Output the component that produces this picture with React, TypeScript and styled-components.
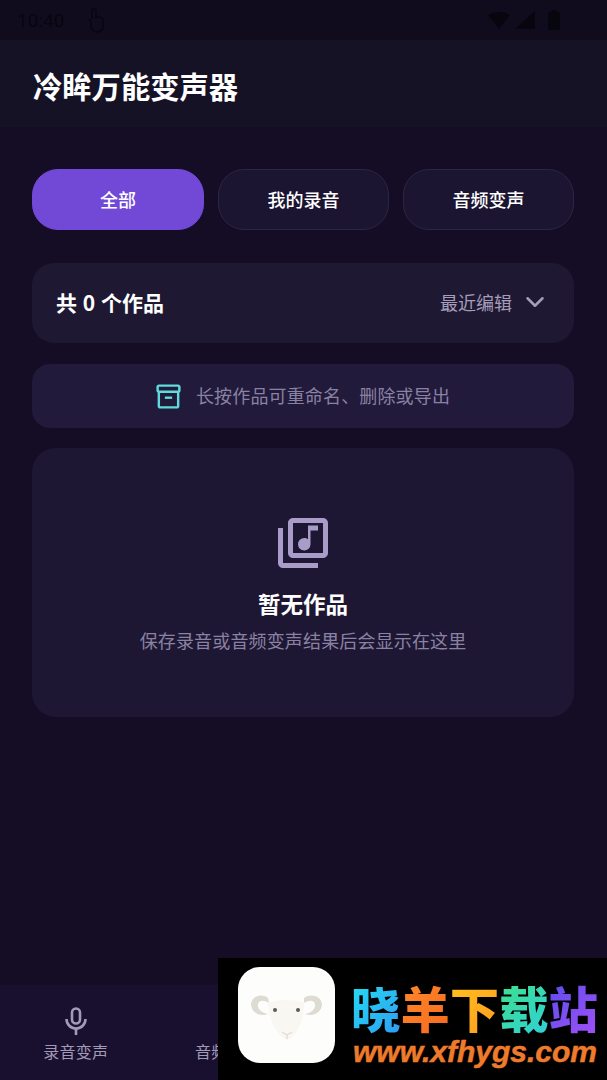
import styled, { createGlobalStyle } from "styled-components";
import { ChevronDown } from "lucide-react";
import { MdOutlineInventory2, MdOutlineLibraryMusic } from "react-icons/md";

const GlobalStyle = createGlobalStyle`
  html, body {
    margin: 0;
    padding: 0;
    background: #150d26;
  }
  * { box-sizing: border-box; }
`;

const CJK = `"Noto Sans CJK SC", "Noto Sans", sans-serif`;

// ── page frame ─────────────────────────────

const Page = styled.div`
  position: relative;
  width: 607px;
  height: 1080px;
  overflow: hidden;
  display: flex;
  flex-direction: column;
  background: #150d26;
  font-family: ${CJK};
`;

const StatusBar = styled.div`
  height: 40px;
  flex: none;
  display: flex;
  align-items: center;
  justify-content: space-between;
  padding: 0 46px 0 17px;
  background: #100c1e;
  color: #07060f;
`;

const StatusGroup = styled.div`
  display: flex;
  align-items: center;
  gap: 24px;
  filter: blur(0.6px);
`;

const StatusIcons = styled(StatusGroup)`
  gap: 5px;
`;

const Clock = styled.span`
  font-family: Roboto, sans-serif;
  font-size: 19px;
`;

const Header = styled.header`
  height: 87px;
  flex: none;
  display: flex;
  align-items: center;
  padding: 2px 33px 0;
  background: #151226;
`;

const Title = styled.h1`
  margin: 0;
  font-size: 29.3px;
  font-weight: 700;
  color: #ffffff;
`;

const Main = styled.main`
  flex: 1;
  display: flex;
  flex-direction: column;
  padding: 42px 33px 0 32px;
`;

// ── tabs ───────────────────────────────────

const Tabs = styled.div`
  display: grid;
  grid-template-columns: 172px 171px 171px;
  gap: 14px;
  height: 61px;
`;

const Tab = styled.div<{ $active?: boolean }>`
  display: flex;
  align-items: center;
  justify-content: center;
  padding-bottom: 2px;
  border-radius: 26px;
  font-size: 18px;
  font-weight: 500;
  color: #ffffff;
  background: ${({ $active }) => ($active ? "#7149d6" : "#1b1531")};
  border: 1px solid ${({ $active }) => ($active ? "#7149d6" : "#2c2644")};
`;

// ── cards ──────────────────────────────────

const SummaryCard = styled.section`
  margin-top: 33px;
  height: 80px;
  display: flex;
  align-items: center;
  justify-content: space-between;
  padding: 0 24px 3px;
  border-radius: 22px;
  background: #1e1833;
`;

const Count = styled.span`
  font-size: 21px;
  font-weight: 700;
  color: #ffffff;
  word-spacing: 1px;
`;

const Sort = styled.div`
  display: flex;
  align-items: center;
  gap: 8px;
  padding-left: 1px;
  font-size: 18px;
  color: #a59db9;
`;

const HintCard = styled.section`
  margin-top: 21px;
  height: 64px;
  display: flex;
  align-items: center;
  justify-content: center;
  gap: 13px;
  padding: 0 1px 3px 0;
  border-radius: 18px;
  background: #211a3b;
  font-size: 18px;
  letter-spacing: 0.15px;
  color: #8a82a3;

  svg {
    color: #5fdbdc;
    margin: 3px 0 0 -1px;
  }
`;

const EmptyCard = styled.section`
  margin-top: 20px;
  height: 269px;
  display: flex;
  flex-direction: column;
  align-items: center;
  padding-top: 65px;
  border-radius: 24px;
  background: #1e1733;

  svg {
    color: #a99cc9;
  }
`;

const EmptyTitle = styled.h2`
  margin: 14px 0 0;
  font-size: 22.5px;
  line-height: 32px;
  font-weight: 700;
  color: #ffffff;
`;

const EmptyText = styled.p`
  margin: 7px 0 0;
  font-size: 18px;
  line-height: 28px;
  letter-spacing: 0.15px;
  color: #8a82a3;
`;

// ── bottom nav ─────────────────────────────

const BottomNav = styled.nav`
  height: 95px;
  flex: none;
  display: grid;
  grid-template-columns: repeat(4, 1fr);
  padding-top: 22px;
  background: #191030;
`;

const NavItem = styled.div`
  display: flex;
  flex-direction: column;
  align-items: center;
  font-size: 16px;
  line-height: 22px;
  letter-spacing: 0.25px;
  color: #a29ab6;
  gap: 5px;
`;

// ── download-site watermark over the nav ───

const Watermark = styled.aside`
  position: absolute;
  right: 0;
  bottom: 0;
  width: 389px;
  height: 122px;
  display: flex;
  align-items: flex-start;
  gap: 16px;
  padding: 9px 0 0 20px;
  background: #000000;
`;

const LogoTile = styled.div`
  width: 97px;
  height: 96px;
  flex: none;
  display: flex;
  align-items: center;
  justify-content: center;
  padding-top: 3px;
  border-radius: 22px;
  background: #fdfdfb;
`;

const Brand = styled.div`
  display: flex;
  flex-direction: column;
  padding-top: 12px;
`;

const BrandName = styled.div`
  display: flex;
  font-size: 49.4px;
  line-height: 56px;
  font-weight: 900;
  white-space: nowrap;
`;

const BrandChar = styled.span<{ $from: string; $to: string }>`
  background: linear-gradient(135deg, ${({ $from }) => $from}, ${({ $to }) => $to});
  -webkit-background-clip: text;
  background-clip: text;
  color: transparent;
`;

const BrandUrl = styled.div`
  font-family: "Liberation Sans", sans-serif;
  font-size: 30px;
  line-height: 34px;
  font-weight: 700;
  font-style: italic;
  margin-left: 2px;
  -webkit-text-stroke: 0.5px #ee7b2c;
  color: #ee7b2c;
  white-space: nowrap;
`;

const SheepLogo = () => (
  <svg width="72" height="48" viewBox="0 0 72 48">
    <path d="M17 5 C10 0 1 3 0 11 C0 19 8 24 17 21 C11 20 6 16 7 11 C8 7 13 7 18 10 Z" fill="#dedbd2" />
    <path d="M53 5 C60 0 70 3 71 11 C71 19 63 24 54 21 C60 20 65 16 64 11 C63 7 58 7 53 10 Z" fill="#dedbd2" />
    <path d="M17 10 C24 6 46 6 53 10 C53 26 46 44 36 47 C26 44 18 26 17 10 Z" fill="#f8f7f2" />
    <circle cx="24" cy="17" r="2" fill="#5c5a55" />
    <circle cx="47" cy="17" r="2" fill="#5c5a55" />
    <path d="M31 39 L36 42 L41 39 M36 42 L36 46" stroke="#e3dcd0" strokeWidth="1.4" fill="none" />
  </svg>
);

const MicIcon = () => (
  <svg width="24" height="28" viewBox="0 0 24 28" fill="none" stroke="#a29ab6" strokeWidth="2.6">
    <rect x="8" y="1.5" width="8" height="15" rx="4" />
    <path d="M2.5 12 a9.5 9.5 0 0 0 19 0 M12 21.5 V28" />
  </svg>
);

// sits under the watermark apart from nothing at all: kept narrow so no edge shows
const NoteIcon = () => (
  <svg width="16" height="28" viewBox="0 0 16 28" fill="none" stroke="#a29ab6" strokeWidth="2.6">
    <path d="M9 21 V3 L15 5" />
    <circle cx="5" cy="21" r="4" />
  </svg>
);

const StatusHand = () => (
  <svg width="17" height="26" viewBox="0 0 17 26" fill="none" stroke="currentColor" strokeWidth="1.6">
    <path d="M4 12 V4 a2 2 0 0 1 4 0 V12 M8 10 h3 a4 4 0 0 1 4 4 v5 a6 6 0 0 1 -12 0 v-4 L1 12" />
  </svg>
);

const StatusGlyphs = () => (
  <StatusIcons>
    <svg width="22" height="18" viewBox="0 0 22 18" fill="currentColor">
      <path d="M0 4 Q11 -3 22 4 L11 18 Z" />
    </svg>
    <svg width="20" height="18" viewBox="0 0 20 18" fill="currentColor">
      <path d="M20 0 V18 H0 Z" />
    </svg>
    <svg width="14" height="20" viewBox="0 0 14 20" fill="currentColor" style={{ marginLeft: 7 }}>
      <path d="M4 0 H10 V2 H13 V20 H1 V2 H4 Z" />
    </svg>
  </StatusIcons>
);

const brandChars = [
  { ch: "晓", from: "#22e0f0", to: "#2f9cf5" },
  { ch: "羊", from: "#ff8a2a", to: "#f5691f" },
  { ch: "下", from: "#ffc21f", to: "#ff9a1f" },
  { ch: "载", from: "#3fe08a", to: "#2fd0d8" },
  { ch: "站", from: "#5b4df0", to: "#a050f5" },
];

export default function App() {
  return (
    <Page>
      <GlobalStyle />
      <StatusBar>
        <StatusGroup>
          <Clock>10:40</Clock>
          <StatusHand />
        </StatusGroup>
        <StatusGlyphs />
      </StatusBar>

      <Header>
        <Title>冷眸万能变声器</Title>
      </Header>

      <Main>
        <Tabs>
          <Tab $active>全部</Tab>
          <Tab>我的录音</Tab>
          <Tab>音频变声</Tab>
        </Tabs>

        <SummaryCard>
          <Count>共 0 个作品</Count>
          <Sort>
            最近编辑
            <ChevronDown size={30} strokeWidth={2} />
          </Sort>
        </SummaryCard>

        <HintCard>
          <MdOutlineInventory2 size={29} />
          长按作品可重命名、删除或导出
        </HintCard>

        <EmptyCard>
          <MdOutlineLibraryMusic size={60} />
          <EmptyTitle>暂无作品</EmptyTitle>
          <EmptyText>保存录音或音频变声结果后会显示在这里</EmptyText>
        </EmptyCard>
      </Main>

      <BottomNav>
        <NavItem>
          <MicIcon />
          录音变声
        </NavItem>
        <NavItem>
          <NoteIcon />
          音频变声
        </NavItem>
      </BottomNav>

      <Watermark>
        <LogoTile>
          <SheepLogo />
        </LogoTile>
        <Brand>
          <BrandName>
            {brandChars.map((c) => (
              <BrandChar key={c.ch} $from={c.from} $to={c.to}>
                {c.ch}
              </BrandChar>
            ))}
          </BrandName>
          <BrandUrl>www.xfhygs.com</BrandUrl>
        </Brand>
      </Watermark>
    </Page>
  );
}
